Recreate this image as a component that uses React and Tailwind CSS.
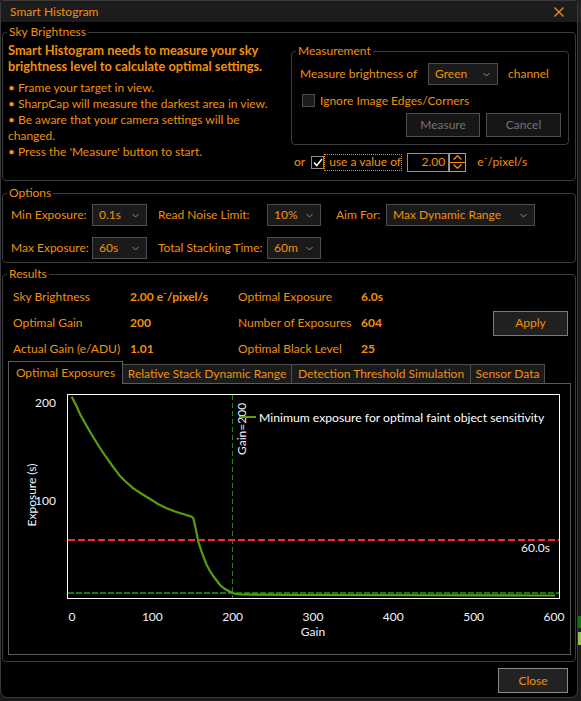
const Chevron = () => (
  <svg width="7" height="5" viewBox="0 0 7 5" className="shrink-0">
    <path d="M0.5 1 L3.5 4 L6.5 1" fill="none" stroke="#8c8c8c" strokeWidth="1" />
  </svg>
);

const Dropdown = ({ value, className }) => (
  <div className={`flex items-center justify-between h-[22px] border border-[#4d4d4d] bg-[#1a1a1a] pl-[6px] pr-[7px] ${className}`}>
    <span>{value}</span>
    <Chevron />
  </div>
);

const Group = ({ title, className, children }) => (
  <fieldset className={`border border-[#3b3b3b] rounded-[4px] min-w-0 ${className}`}>
    <legend className="ml-[4px] px-[2px] leading-[16px]">{title}</legend>
    {children}
  </fieldset>
);

const Button = ({ children, className }) => (
  <div className={`flex items-center justify-center border ${className}`}>{children}</div>
);

const curve =
  '71.7,396.7 76,405 80,414 85,423 90,431.7 95,440 100,448 106,457 111.7,465 116.7,471.7 120,476 125,481 133.3,488.3 142,494 151.7,500 158,504 166.7,508.3 175,511.5 183,514 191.7,516.7 193.3,518.3 196,530 198.3,541.7 202,553 206.7,565 210,571 214,577 220,585 225,589 230,591.7 234,593.5 240,594.5 300,595 555,595.5';

const Chart = () => {
  const ticks = [0, 100, 200, 300, 400, 500, 600];
  return (
    <svg width="561" height="270" viewBox="9 384 561 270" className="block">
      <defs>
        <clipPath id="plot">
          <rect x="68" y="395" width="491" height="203" />
        </clipPath>
      </defs>
      <g fontFamily="Lato, sans-serif" fontSize="12" fill="#eef2ff">
        <text x="56" y="407" textAnchor="end">200</text>
        <text x="56" y="505" textAnchor="end">100</text>
        <text transform="translate(36,495) rotate(-90)" textAnchor="middle">Exposure (s)</text>
        {ticks.map((t) => (
          <text key={t} x={72 + t * 0.8033} y="621" textAnchor="middle">{t}</text>
        ))}
        <text x="313" y="636" textAnchor="middle">Gain</text>
      </g>
      <g clipPath="url(#plot)">
        <line x1="232.5" y1="395" x2="232.5" y2="598" stroke="#1a8a1a" strokeWidth="1" strokeDasharray="5 3" />
        <line x1="68" y1="540" x2="559" y2="540" stroke="#ff2626" strokeWidth="2" strokeDasharray="7 3" />
        <line x1="68" y1="593" x2="559" y2="593" stroke="#0c7a0c" strokeWidth="2" strokeDasharray="6 2" />
        <polyline points={curve} fill="none" stroke="#5a9c10" strokeWidth="2.2" />
        <g fontFamily="Lato, sans-serif" fontSize="12" fill="#eef2ff">
          <text x="521" y="552">60.0s</text>
          <text x="523" y="607">6.0s</text>
          <text transform="translate(246,455) rotate(-90)">Gain=200</text>
        </g>
        <line x1="239" y1="417" x2="256" y2="417" stroke="#5a9c10" strokeWidth="2" />
        <text x="259" y="421.5" fontFamily="Lato, sans-serif" fontSize="12.2" fill="#ffffff">
          Minimum exposure for optimal faint object sensitivity
        </text>
      </g>
      <rect x="67.5" y="394.5" width="492" height="204" fill="none" stroke="#ffffff" strokeWidth="1" />
    </svg>
  );
};

export default function App() {
  return (
    <div className="flex bg-[#1a1a1a] w-[581px] h-[701px] font-['Lato',sans-serif] text-[12px] leading-[16px] text-[#f0900c]">
      <div className="w-[578px] h-[698px] shrink-0 border border-[#3a3a3a] rounded-t-[3px] rounded-b-[7px] bg-black flex flex-col overflow-hidden">
        {/* Title bar */}
        <div className="h-[21px] shrink-0 bg-[#1c1c1c] flex items-center justify-between pl-[9px] pr-[13px]">
          <span>Smart Histogram</span>
          <svg width="10" height="10" viewBox="0 0 10 10">
            <path d="M0.5 0.5 L9.5 9.5 M9.5 0.5 L0.5 9.5" stroke="#f0900c" strokeWidth="1.3" />
          </svg>
        </div>

        <div className="px-[1px] flex flex-col">
          {/* Sky Brightness */}
          <Group title="Sky Brightness" className="mt-[2px] h-[157px]">
            <div className="flex">
              <div className="w-[286px] pl-[5px] pt-[2px] whitespace-nowrap">
                <p className="font-bold text-[12.8px]">
                  Smart Histogram needs to measure your sky
                  <br />
                  brightness level to calculate optimal settings.
                </p>
                <div className="mt-[6px]">
                  <p>• Frame your target in view.</p>
                  <p>• SharpCap will measure the darkest area in view.</p>
                  <p>
                    • Be aware that your camera settings will be
                    <br />
                    changed.
                  </p>
                  <p>• Press the 'Measure' button to start.</p>
                </div>
              </div>
              <div className="ml-[2px] w-[278px] flex flex-col">
                <Group title="Measurement" className="mt-[3px] h-[102px]">
                  <div className="flex items-center mt-[4px] pl-[8px] h-[22px]">
                    <span className="w-[128px]">Measure brightness of</span>
                    <Dropdown value="Green" className="w-[70px]" />
                    <span className="ml-[10px]">channel</span>
                  </div>
                  <div className="flex items-center mt-[9px] pl-[10px] h-[13px]">
                    <span className="w-[13px] h-[13px] border border-[#4a4a4a] bg-[#1c1c1c]" />
                    <span className="ml-[5px]">Ignore Image Edges/Corners</span>
                  </div>
                  <div className="flex justify-end gap-[6px] mt-[6px] pr-[7px]">
                    <Button className="w-[74px] h-[24px] border-[#505050] bg-[#161616] text-[#737373]">Measure</Button>
                    <Button className="w-[75px] h-[24px] border-[#505050] bg-[#161616] text-[#737373]">Cancel</Button>
                  </div>
                </Group>
                <div className="mt-[7px] flex items-center h-[20px] pl-[3px]">
                  <span>or</span>
                  <span className="ml-[6px] w-[13px] h-[13px] border border-[#8a8a8a] bg-black flex items-center justify-center">
                    <svg width="10" height="9" viewBox="0 0 10 9">
                      <path d="M1 4.5 L3.8 7.5 L9 1" fill="none" stroke="#ffffff" strokeWidth="1.5" />
                    </svg>
                  </span>
                  <span className="w-[78px] h-[17px] pl-[4px] border border-dotted border-[#f0900c] flex items-center">use a value of</span>
                  <div className="ml-[5px] flex h-[19px]">
                    <div className="w-[42px] border border-[#8f8f8f] flex items-center justify-end pr-[3px]">2.00</div>
                    <div className="w-[17px] border border-[#f0900c] flex flex-col">
                      <div className="flex-1 flex items-center justify-center border-b border-[#f0900c]">
                        <svg width="9" height="5" viewBox="0 0 9 5">
                          <path d="M0.5 4.5 L4.5 0.8 L8.5 4.5" fill="none" stroke="#f0900c" strokeWidth="1.4" />
                        </svg>
                      </div>
                      <div className="flex-1 flex items-center justify-center">
                        <svg width="9" height="5" viewBox="0 0 9 5">
                          <path d="M0.5 0.5 L4.5 4.2 L8.5 0.5" fill="none" stroke="#f0900c" strokeWidth="1.4" />
                        </svg>
                      </div>
                    </div>
                  </div>
                  <span className="ml-[11px]">e⁻/pixel/s</span>
                </div>
              </div>
            </div>
          </Group>

          {/* Options */}
          <Group title="Options" className="mt-[4px] h-[78px]">
            <div className="pl-[8px] pt-[3px] flex flex-col gap-[11px]">
              <div className="flex items-center h-[22px]">
                <span className="w-[81px]">Min Exposure:</span>
                <Dropdown value="0.1s" className="w-[55px]" />
                <span className="ml-[11px] w-[109px]">Read Noise Limit:</span>
                <Dropdown value="10%" className="w-[54px]" />
                <span className="ml-[15px] w-[50px]">Aim For:</span>
                <Dropdown value="Max Dynamic Range" className="w-[149px]" />
              </div>
              <div className="flex items-center h-[22px]">
                <span className="w-[81px]">Max Exposure:</span>
                <Dropdown value="60s" className="w-[55px]" />
                <span className="ml-[11px] w-[109px]">Total Stacking Time:</span>
                <Dropdown value="60m" className="w-[54px]" />
              </div>
            </div>
          </Group>

          {/* Results */}
          <Group title="Results" className="mt-[3px] h-[396px]">
            <div className="flex items-center pt-[2px] pr-[7px]">
              <div className="grid grid-cols-[117px_108px_123px_60px] auto-rows-[26px] items-center pl-[10px]">
                <span>Sky Brightness</span>
                <span className="font-bold">2.00 e⁻/pixel/s</span>
                <span>Optimal Exposure</span>
                <span className="font-bold">6.0s</span>
                <span>Optimal Gain</span>
                <span className="font-bold">200</span>
                <span>Number of Exposures</span>
                <span className="font-bold">604</span>
                <span>Actual Gain (e/ADU)</span>
                <span className="font-bold">1.01</span>
                <span>Optimal Black Level</span>
                <span className="font-bold">25</span>
              </div>
              <Button className="ml-auto w-[75px] h-[25px] border-[#7a7a7a] bg-[#202020]">Apply</Button>
            </div>

            <div className="ml-[5px] h-[21px] flex items-end">
              <div className="relative z-10 w-[115px] h-[23px] -mb-[1px] border-t border-l border-r border-[#5e5e5e] bg-black flex items-center justify-center">
                Optimal Exposures
              </div>
              <div className="-ml-[1px] w-[170px] h-[19px] border-t border-l border-r border-[#4e4e4e] bg-[#1b1b1b] flex items-center justify-center">
                Relative Stack Dynamic Range
              </div>
              <div className="-ml-[1px] w-[180px] h-[19px] border-t border-l border-r border-[#4e4e4e] bg-[#1b1b1b] flex items-center justify-center">
                Detection Threshold Simulation
              </div>
              <div className="-ml-[1px] w-[75px] h-[19px] border-t border-l border-r border-[#4e4e4e] bg-[#1b1b1b] flex items-center justify-center">
                Sensor Data
              </div>
            </div>
            <div className="ml-[5px] w-[563px] h-[272px] border border-[#5a5a5a] bg-black">
              <Chart />
            </div>
          </Group>

          <div className="mt-[6px] flex justify-end pr-[8px]">
            <Button className="w-[70px] h-[25px] border-[#8a8a8a] bg-[#222222]">Close</Button>
          </div>
        </div>
      </div>

      {/* edge of the window behind */}
      <div className="flex-1 flex flex-col">
        <div className="h-[22px] bg-[#242424]" />
        <div className="h-[594px]" />
        <div className="h-[12px] bg-[#0b7a0b]" />
        <div className="h-[4px]" />
        <div className="h-[13px] bg-[#8dc63f]" />
      </div>
    </div>
  );
}
